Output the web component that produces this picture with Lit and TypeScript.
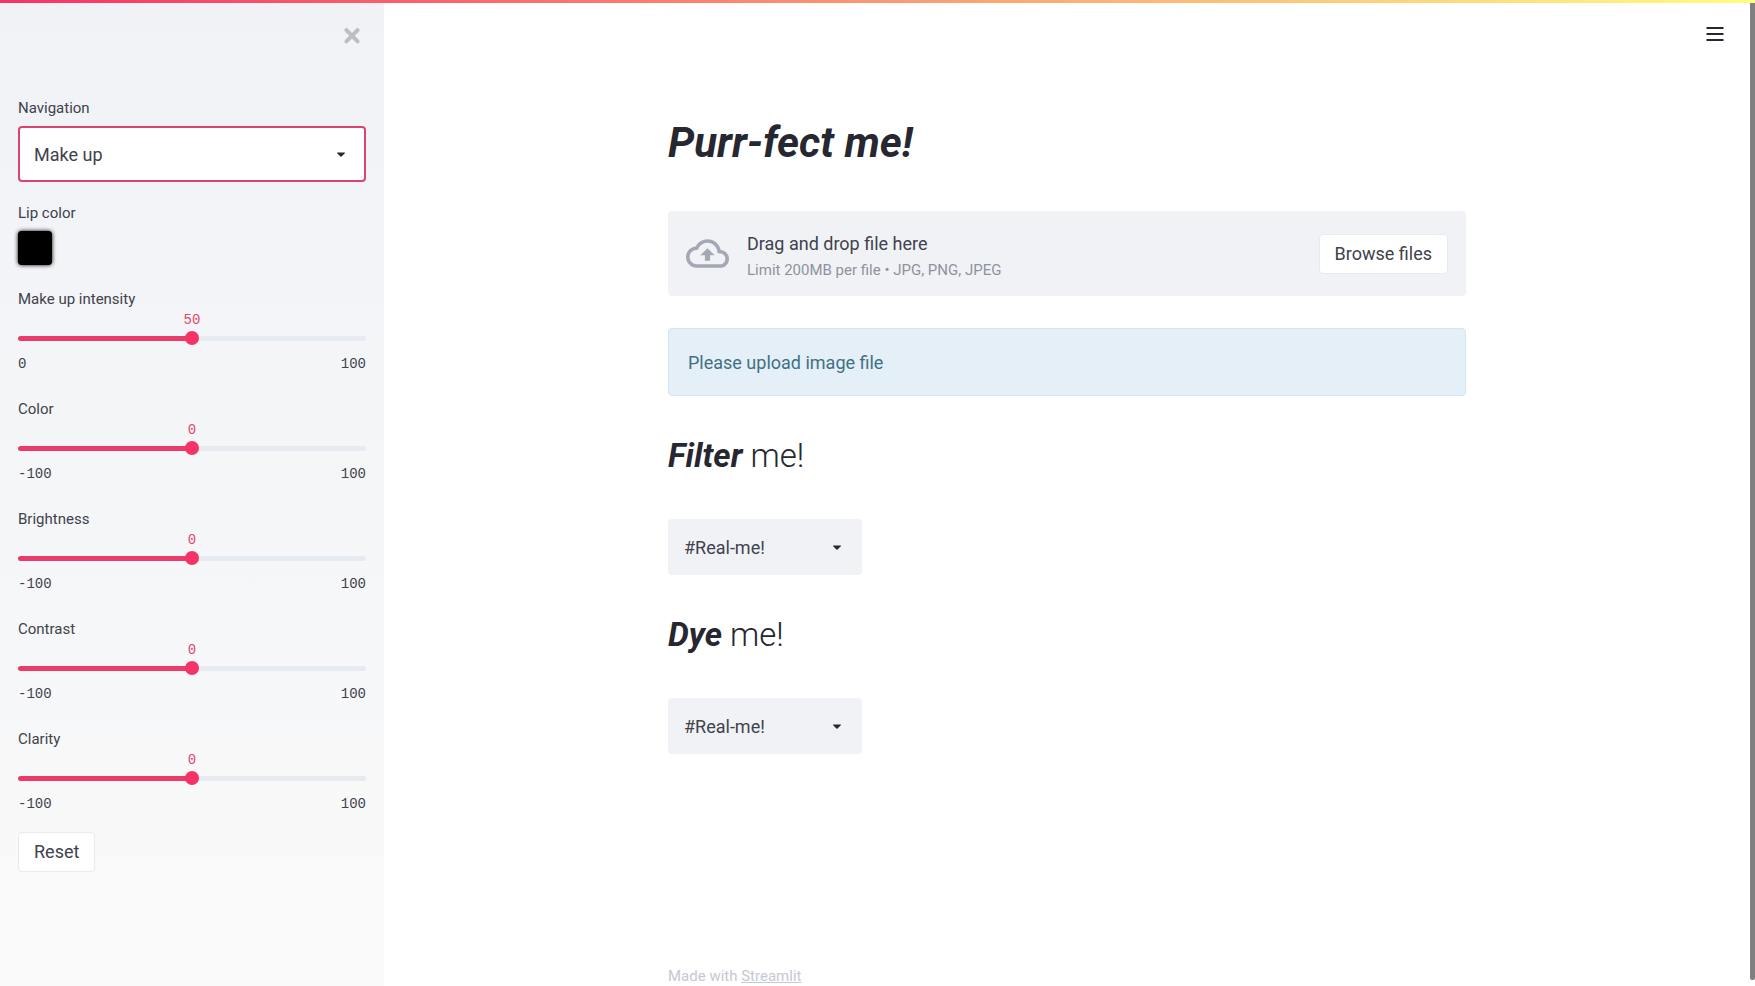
import { LitElement, html, css, svg, nothing } from "lit";
import { customElement, property, state } from "lit/decorators.js";

const triangle = svg`<path d="M12.7071 15.2929L17.1464 10.8536C17.4614 10.5386 17.2383 10 16.7929 10L7.20711 10C6.76165 10 6.53857 10.5386 6.85355 10.8536L11.2929 15.2929C11.6834 15.6834 12.3166 15.6834 12.7071 15.2929Z"/>`;

@customElement("select-box")
class SelectBox extends LitElement {
  @property() label = "";
  @property({ type: Boolean, attribute: "hide-label" }) hideLabel = false;
  @property({ type: Boolean }) active = false;
  @property({ attribute: false }) options: string[] = [];

  static styles = css`
    :host {
      display: block;
    }
    .label {
      display: block;
      margin-bottom: 8px;
      font-size: 15px;
      line-height: 20px;
    }
    .box {
      display: grid;
      align-items: center;
    }
    .field {
      grid-area: 1 / 1;
      appearance: none;
      box-sizing: border-box;
      width: 100%;
      height: 56px;
      padding: 2px 40px 0 14px;
      border: 2px solid #f0f2f6;
      border-radius: 4px;
      outline: none;
      background: #f0f2f6;
      color: inherit;
      font: inherit;
      cursor: pointer;
    }
    .field.active {
      border-color: #dc4470;
      background: #ffffff;
    }
    .arrow {
      grid-area: 1 / 1;
      justify-self: end;
      width: 18px;
      height: 18px;
      margin-right: 16px;
      fill: #262730;
      pointer-events: none;
    }
  `;

  render() {
    return html`
      ${this.hideLabel ? nothing : html`<label class="label" for="field">${this.label}</label>`}
      <div class="box">
        <select
          id="field"
          class="field ${this.active ? "active" : ""}"
          aria-label=${this.hideLabel ? this.label : nothing}
        >
          ${this.options.map((o) => html`<option>${o}</option>`)}
        </select>
        <svg class="arrow" viewBox="0 0 24 24" aria-hidden="true">${triangle}</svg>
      </div>
    `;
  }
}

@customElement("range-slider")
class RangeSlider extends LitElement {
  @property() label = "";
  @property({ type: Number }) min = 0;
  @property({ type: Number }) max = 100;
  @property({ type: Number }) value = 0;

  static styles = css`
    :host {
      display: block;
      font-size: 15px;
      line-height: 20px;
    }
    .label {
      display: block;
      margin-bottom: 1px;
    }
    .mono {
      font-family: "Liberation Mono", monospace;
      font-size: 14px;
    }
    .value-row {
      display: flex;
      color: #e5476f;
    }
    .value {
      display: flex;
      justify-content: center;
      width: 0;
    }
    .range {
      appearance: none;
      display: block;
      width: 100%;
      height: 16px;
      margin: 0;
      background: transparent;
      cursor: pointer;
    }
    .range::-webkit-slider-runnable-track {
      height: 5px;
      border-radius: 3px;
      background: linear-gradient(to right, #e93c6a var(--fill), #e6eaf1 var(--fill));
    }
    .range::-webkit-slider-thumb {
      appearance: none;
      width: 14px;
      height: 14px;
      margin-top: -5px;
      border-radius: 50%;
      background: #f63366;
    }
    .ends {
      display: flex;
      justify-content: space-between;
      margin-top: 8px;
    }
  `;

  render() {
    const fill = `${((this.value - this.min) / (this.max - this.min)) * 100}%`;
    return html`
      <label class="label" for="range">${this.label}</label>
      <div class="value-row mono" style="padding-left: ${fill}">
        <output class="value" for="range">${this.value}</output>
      </div>
      <input
        id="range"
        class="range"
        type="range"
        min=${this.min}
        max=${this.max}
        .value=${String(this.value)}
        style="--fill: ${fill}"
        @input=${(e: Event) => (this.value = Number((e.target as HTMLInputElement).value))}
      />
      <div class="ends mono"><span>${this.min}</span><span>${this.max}</span></div>
    `;
  }
}

@customElement("app-root")
class AppRoot extends LitElement {
  @state() private adjustments = ["Color", "Brightness", "Contrast", "Clarity"];

  static styles = css`
    :host {
      display: flex;
      flex-direction: column;
      min-height: 100vh;
      background: #ffffff;
      color: #40424c;
      font-family: Roboto, sans-serif;
      font-size: 18px;
      line-height: 28px;
    }
    .strip {
      height: 3px;
      background: linear-gradient(to right, #f63366, #fffd80);
    }
    .shell {
      flex: 1;
      display: grid;
      grid-template-columns: 384px minmax(0, 1fr) 5px;
    }
    .sidebar {
      display: flex;
      flex-direction: column;
      padding: 19px 18px;
      background: linear-gradient(to bottom, #f0f2f6, #fafafa);
    }
    .close,
    .menu {
      align-self: flex-end;
      display: grid;
      place-items: center;
      width: 28px;
      height: 28px;
      padding: 0;
      border: 0;
      background: none;
      cursor: pointer;
    }
    .close {
      margin-bottom: 48px;
    }
    .icon {
      width: 20px;
      height: 20px;
    }
    .picker {
      display: grid;
      justify-items: start;
      gap: 8px;
      margin: 21px 0 24px;
      font-size: 15px;
      line-height: 20px;
    }
    .swatch {
      appearance: none;
      width: 34px;
      height: 34px;
      padding: 0;
      border: 0;
      border-radius: 4px;
      background: #000000;
      box-shadow: 0 0 4px #000000;
      cursor: pointer;
    }
    .swatch::-webkit-color-swatch-wrapper {
      padding: 0;
    }
    .swatch::-webkit-color-swatch {
      border: 0;
      border-radius: 4px;
    }
    .sliders {
      display: grid;
      gap: 25px;
      margin-bottom: 18px;
    }
    .button {
      box-sizing: border-box;
      height: 40px;
      padding: 0 15px;
      border: 1px solid #e6eaf1;
      border-radius: 4px;
      background: #ffffff;
      color: inherit;
      font: inherit;
      cursor: pointer;
    }
    .reset {
      align-self: flex-start;
    }
    .main {
      display: flex;
      flex-direction: column;
    }
    .menu {
      margin: 17px 21px 0 0;
    }
    .content {
      flex: 1;
      display: flex;
      flex-direction: column;
      box-sizing: border-box;
      width: 100%;
      max-width: 834px;
      margin: 0 auto;
      padding: 71px 18px 0;
    }
    h1,
    h2,
    p {
      margin: 0;
    }
    h1 {
      margin-bottom: 44px;
      color: #262730;
      font-size: 42px;
      font-style: italic;
      font-weight: 700;
      line-height: 48px;
    }
    h2 {
      margin: 38px 0 41px;
      color: #262730;
      font-size: 33px;
      font-weight: 300;
      line-height: 44px;
    }
    h2 em {
      font-weight: 700;
    }
    .uploader {
      display: flex;
      align-items: center;
      gap: 18px;
      padding: 15px 18px;
      border-radius: 4px;
      background: #f0f2f6;
    }
    .cloud {
      flex: none;
      width: 43px;
      height: 43px;
      fill: #a3a8b4;
    }
    .hint {
      flex: 1;
      padding-top: 4px;
    }
    .hint small {
      display: block;
      margin-top: 2px;
      color: #8f929e;
      font-size: 15px;
      line-height: 21px;
    }
    .notice {
      margin-top: 32px;
      padding: 20px 19px 18px;
      border: 1px solid #d5e4f1;
      border-radius: 4px;
      background: #e4eff8;
      color: #3f7183;
    }
    .narrow {
      width: 194px;
    }
    .footer {
      margin-top: auto;
      color: #c5c8d2;
      font-size: 15px;
      line-height: 20px;
    }
    .footer a {
      color: inherit;
    }
    .scrollbar {
      margin-bottom: 6px;
      border-radius: 0 0 2px 2px;
      background: #808080;
    }
  `;

  render() {
    return html`
      <div class="strip"></div>
      <div class="shell">
        <aside class="sidebar">
          <button class="close" aria-label="Close sidebar">
            <svg class="icon" viewBox="0 0 20 20" aria-hidden="true">
              <path d="M4.4 4.2L15.6 15.4M15.6 4.2L4.4 15.4" stroke="#bcbec4" stroke-width="4" stroke-linecap="round" />
            </svg>
          </button>
          <select-box label="Navigation" active .options=${["Make up"]}></select-box>
          <div class="picker">
            <label for="lip">Lip color</label>
            <input id="lip" class="swatch" type="color" value="#000000" />
          </div>
          <div class="sliders">
            <range-slider label="Make up intensity" value="50"></range-slider>
            ${this.adjustments.map((name) => html`<range-slider label=${name} min="-100" value="0"></range-slider>`)}
          </div>
          <button class="button reset">Reset</button>
        </aside>
        <main class="main">
          <button class="menu" aria-label="Menu">
            <svg class="icon" viewBox="0 0 20 20" aria-hidden="true">
              <path d="M1.5 4H18.5M1.5 10H18.5M1.5 16H18.5" stroke="#262730" stroke-width="2" />
            </svg>
          </button>
          <div class="content">
            <h1>Purr-fect me!</h1>
            <section class="uploader">
              <svg class="cloud" viewBox="0 0 24 24" aria-hidden="true">
                <path
                  d="M19.35 10.04C18.67 6.59 15.64 4 12 4 9.11 4 6.6 5.64 5.35 8.04 2.34 8.36 0 10.91 0 14c0 3.31 2.69 6 6 6h13c2.76 0 5-2.24 5-5 0-2.64-2.05-4.78-4.65-4.96zM19 18H6c-2.21 0-4-1.79-4-4 0-2.05 1.53-3.76 3.56-3.97l1.07-.11.5-.95C8.08 7.14 9.94 6 12 6c2.62 0 4.88 1.86 5.39 4.43l.3 1.5 1.53.11c1.56.1 2.78 1.41 2.78 2.96 0 1.65-1.35 3-3 3zM8 13h2.55v3h2.9v-3H16l-4-4z"
                />
              </svg>
              <div class="hint">
                Drag and drop file here
                <small>Limit 200MB per file • JPG, PNG, JPEG</small>
              </div>
              <button class="button">Browse files</button>
            </section>
            <p class="notice" role="status">Please upload image file</p>
            <h2><em>Filter</em> me!</h2>
            <select-box class="narrow" label="Filter" hide-label .options=${["#Real-me!"]}></select-box>
            <h2><em>Dye</em> me!</h2>
            <select-box class="narrow" label="Dye" hide-label .options=${["#Real-me!"]}></select-box>
            <footer class="footer">Made with <a href="#">Streamlit</a></footer>
          </div>
        </main>
        <div class="scrollbar"></div>
      </div>
    `;
  }
}
